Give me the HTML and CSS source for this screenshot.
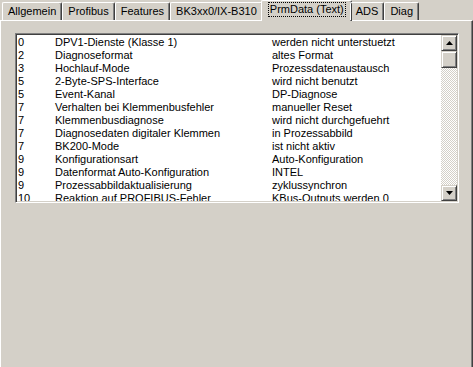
FILE: index.html
```html
<!DOCTYPE html>
<html lang="de">
<head>
    <meta charset="UTF-8">
    <title>PrmData (Text)</title>
    <link rel="stylesheet" href="styles.css">
</head>
<body>

<div class="tabs">
    <div class="tab">Allgemein</div>
    <div class="tab">Profibus</div>
    <div class="tab">Features</div>
    <div class="tab">BK3xx0/IX-B310</div>
    <div class="tab active"><span class="focus">PrmData (Text)</span></div>
    <div class="tab">ADS</div>
    <div class="tab">Diag</div>
</div>

<div class="panel">
    <div class="listbox">
        <div class="rows">
            <div class="row"><span>0</span><span>DPV1-Dienste (Klasse 1)</span><span>werden nicht unterstuetzt</span></div>
            <div class="row"><span>2</span><span>Diagnoseformat</span><span>altes Format</span></div>
            <div class="row"><span>3</span><span>Hochlauf-Mode</span><span>Prozessdatenaustausch</span></div>
            <div class="row"><span>5</span><span>2-Byte-SPS-Interface</span><span>wird nicht benutzt</span></div>
            <div class="row"><span>5</span><span>Event-Kanal</span><span>DP-Diagnose</span></div>
            <div class="row"><span>7</span><span>Verhalten bei Klemmenbusfehler</span><span>manueller Reset</span></div>
            <div class="row"><span>7</span><span>Klemmenbusdiagnose</span><span>wird nicht durchgefuehrt</span></div>
            <div class="row"><span>7</span><span>Diagnosedaten digitaler Klemmen</span><span>in Prozessabbild</span></div>
            <div class="row"><span>7</span><span>BK200-Mode</span><span>ist nicht aktiv</span></div>
            <div class="row"><span>9</span><span>Konfigurationsart</span><span>Auto-Konfiguration</span></div>
            <div class="row"><span>9</span><span>Datenformat Auto-Konfiguration</span><span>INTEL</span></div>
            <div class="row"><span>9</span><span>Prozessabbildaktualisierung</span><span>zyklussynchron</span></div>
            <div class="row"><span>10</span><span>Reaktion auf PROFIBUS-Fehler</span><span>KBus-Outputs werden 0</span></div>
        </div>
        <div class="scrollbar">
            <div class="sb-button">
                <svg width="7" height="4" viewBox="0 0 7 4"><polygon points="3.5,0 7,4 0,4" fill="#000"/></svg>
            </div>
            <div class="sb-thumb"></div>
            <div class="sb-track"></div>
            <div class="sb-button">
                <svg width="7" height="4" viewBox="0 0 7 4"><polygon points="0,0 7,0 3.5,4" fill="#000"/></svg>
            </div>
        </div>
    </div>
</div>

</body>
</html>
```
FILE: styles.css
```css
body {
    margin: 0;
    background-color: #d4d0c8;
    font-family: "Liberation Sans", Arial, sans-serif;
    font-size: 11px;
    color: #000;
    width: 473px;
    height: 367px;
    overflow: hidden;
}

/* tab strip */
.tabs {
    display: flex;
    align-items: flex-end;
    height: 20px;
    padding-left: 2px;
    position: relative;
    z-index: 1;
}

.tab {
    height: 17px;
    padding: 0 5px 0 5px;
    line-height: 17px;
    border-top: 1px solid #fff;
    border-left: 1px solid #fff;
    border-right: 1px solid #404040;
    border-radius: 2px 2px 0 0;
    box-shadow: inset -1px 0 #808080;
    white-space: nowrap;
}

.tab.active {
    height: 20px;
    line-height: 16px;
    margin: 0 -2px -1px -2px;
    padding: 0 6px 0 7px;
    background-color: #d4d0c8;
}

.focus {
    display: inline-block;
    line-height: 13px;
    padding: 0 1px;
    outline: 1px dotted #000;
    outline-offset: 0;
}

/* page body */
.panel {
    height: 344px;
    border-top: 1px solid #fff;
    border-left: 1px solid #fff;
    border-right: 1px solid #404040;
    border-bottom: 1px solid #404040;
    box-shadow: inset -1px -1px #808080;
    padding: 12px 0 0 14px;
}

.listbox {
    display: flex;
    width: 440px;
    height: 166px;
    background-color: #fff;
    border: 1px solid;
    border-color: #808080 #fff #fff #808080;
    box-shadow: inset 1px 1px #404040, inset -1px -1px #d4d0c8;
    padding: 1px;
}

.rows {
    flex: 1;
    overflow: hidden;
    padding-top: 1px;
}

.row {
    display: grid;
    grid-template-columns: 37px 217px 1fr;
    height: 13px;
    line-height: 13px;
    padding-left: 1px;
    white-space: nowrap;
}

/* scrollbar */
.scrollbar {
    display: flex;
    flex-direction: column;
    width: 16px;
}

.sb-button,
.sb-thumb {
    box-sizing: border-box;
    width: 16px;
    height: 16px;
    background-color: #d4d0c8;
    border: 1px solid;
    border-color: #d4d0c8 #404040 #404040 #d4d0c8;
    box-shadow: inset 1px 1px #fff, inset -1px -1px #808080;
    display: flex;
    align-items: center;
    justify-content: center;
}

.sb-thumb {
    height: 17px;
}

.sb-track {
    flex: 1;
    background: repeating-conic-gradient(#d4d0c8 0 25%, #fff 0 50%) 0 0 / 2px 2px;
}
```
